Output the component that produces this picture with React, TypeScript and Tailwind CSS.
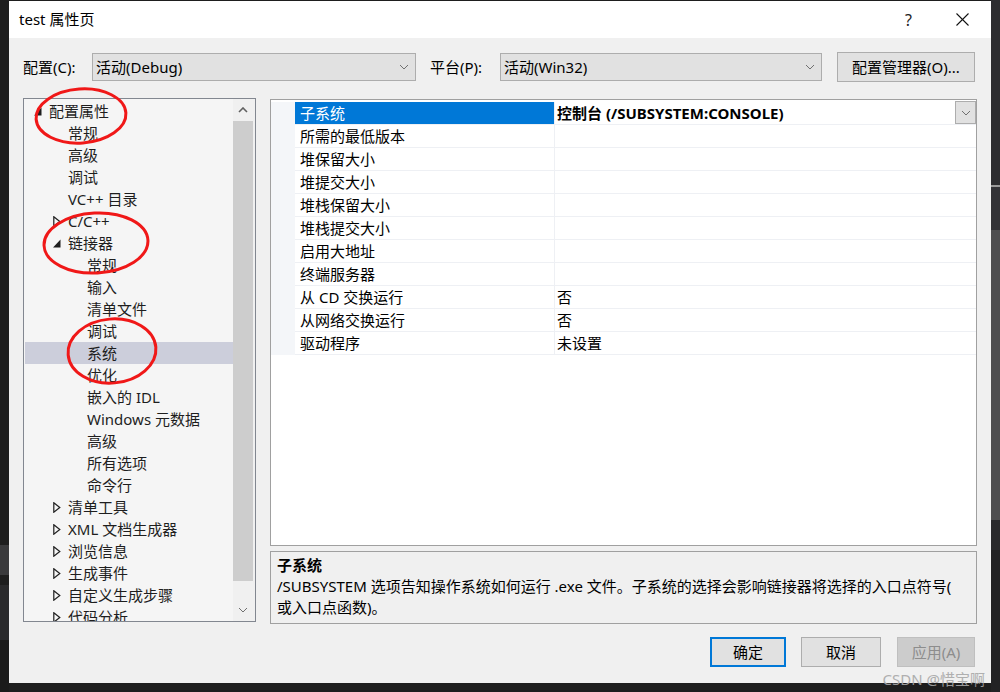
import React from 'react';

type TreeItem = { label: string; level: number; arrow?: 'open' | 'closed'; selected?: boolean };

const treeItems: TreeItem[] = [
  { label: '配置属性', level: 0, arrow: 'open' },
  { label: '常规', level: 1 },
  { label: '高级', level: 1 },
  { label: '调试', level: 1 },
  { label: 'VC++ 目录', level: 1 },
  { label: 'C/C++', level: 1, arrow: 'closed' },
  { label: '链接器', level: 1, arrow: 'open' },
  { label: '常规', level: 2 },
  { label: '输入', level: 2 },
  { label: '清单文件', level: 2 },
  { label: '调试', level: 2 },
  { label: '系统', level: 2, selected: true },
  { label: '优化', level: 2 },
  { label: '嵌入的 IDL', level: 2 },
  { label: 'Windows 元数据', level: 2 },
  { label: '高级', level: 2 },
  { label: '所有选项', level: 2 },
  { label: '命令行', level: 2 },
  { label: '清单工具', level: 1, arrow: 'closed' },
  { label: 'XML 文档生成器', level: 1, arrow: 'closed' },
  { label: '浏览信息', level: 1, arrow: 'closed' },
  { label: '生成事件', level: 1, arrow: 'closed' },
  { label: '自定义生成步骤', level: 1, arrow: 'closed' },
  { label: '代码分析', level: 1, arrow: 'closed' },
];

const props: { name: string; value: string }[] = [
  { name: '子系统', value: '控制台 (/SUBSYSTEM:CONSOLE)' },
  { name: '所需的最低版本', value: '' },
  { name: '堆保留大小', value: '' },
  { name: '堆提交大小', value: '' },
  { name: '堆栈保留大小', value: '' },
  { name: '堆栈提交大小', value: '' },
  { name: '启用大地址', value: '' },
  { name: '终端服务器', value: '' },
  { name: '从 CD 交换运行', value: '否' },
  { name: '从网络交换运行', value: '否' },
  { name: '驱动程序', value: '未设置' },
];

const indent = ['pl-[24px]', 'pl-[43px]', 'pl-[62px]'];
const arrowLeft = ['left-[9px]', 'left-[28px]', 'left-[47px]'];

function Chevron({ up = false }: { up?: boolean }) {
  return (
    <svg width="10" height="6" viewBox="0 0 10 6" className="shrink-0">
      <polyline
        points={up ? '1,5 5,1 9,5' : '1,1 5,5 9,1'}
        fill="none"
        stroke={up ? '#606060' : '#707070'}
        strokeWidth={up ? 1.6 : 1}
      />
    </svg>
  );
}

function TreeArrow({ kind }: { kind: 'open' | 'closed' }) {
  if (kind === 'open') {
    return (
      <svg width="8" height="9" viewBox="0 0 8 9">
        <polygon points="7.5,0.5 7.5,8.5 0,8.5" fill="#1e1e1e" />
      </svg>
    );
  }
  return (
    <svg width="8" height="11" viewBox="0 0 8 11">
      <polygon points="0.8,0.8 6.8,5.5 0.8,10.2" fill="none" stroke="#1e1e1e" strokeWidth="1.2" />
    </svg>
  );
}

function Select({ value, width }: { value: string; width: string }) {
  return (
    <div
      className={`${width} h-[28px] border border-[#adadad] bg-[#e1e1e1] flex items-center pl-[3px] pr-[6px]`}
    >
      <span className="flex-1 leading-none">{value}</span>
      <Chevron />
    </div>
  );
}

export default function App() {
  return (
    <div className="relative w-[1000px] h-[692px] bg-[#1e1e1e] flex overflow-hidden text-[15px] text-black font-['Noto_Sans','Noto_Sans_CJK_SC',sans-serif]">
      {/* VS behind the dialog, left strip */}
      <div className="w-[9px] flex flex-col">
        <div className="h-[545px] bg-[#1e1e1e]" />
        <div className="h-[30px] bg-[#3a3a3c]" />
        <div className="h-[10px] bg-[#1e1e1e]" />
        <div className="h-[55px] bg-[#2a2a2c]" />
        <div className="flex-1 bg-[#1b1b1b]" />
      </div>

      {/* Dialog */}
      <div className="w-[982px] h-[682px] mt-[1px] bg-[#f0f0f0] flex flex-col">
        {/* Title bar */}
        <div className="h-[37px] bg-white flex items-center pl-[10px] pr-[22px]">
          <span className="leading-none">test 属性页</span>
          <span className="ml-auto mr-[44px] text-[16px] leading-none text-[#222]">?</span>
          <svg width="13" height="13" viewBox="0 0 13 13">
            <line x1="0.5" y1="0.5" x2="12.5" y2="12.5" stroke="#111" strokeWidth="1.1" />
            <line x1="12.5" y1="0.5" x2="0.5" y2="12.5" stroke="#111" strokeWidth="1.1" />
          </svg>
        </div>

        {/* Configuration row */}
        <div className="mt-[14px] h-[30px] px-[14px] flex items-center">
          <span className="w-[69px] leading-none">配置(C):</span>
          <Select value="活动(Debug)" width="w-[324px]" />
          <span className="w-[70px] ml-[14px] leading-none">平台(P):</span>
          <Select value="活动(Win32)" width="w-[322px]" />
          <button className="ml-[15px] w-[138px] h-[30px] border border-[#adadad] bg-[#e1e1e1] leading-none">
            配置管理器(O)...
          </button>
        </div>

        {/* Main area */}
        <div className="mt-[16px] px-[14px] flex gap-[14px] items-start">
          {/* Tree */}
          <div className="w-[233px] h-[524px] border border-[#828790] bg-[#f5f5f5] flex">
            <div className="flex-1 overflow-hidden pt-[1px] pl-[1px]">
              {treeItems.map((item, i) => (
                <div
                  key={i}
                  className={`relative h-[22px] flex items-center leading-none text-[#1e1e1e] ${indent[item.level]} ${
                    item.selected ? 'bg-[#cccedb]' : ''
                  }`}
                >
                  {item.arrow && (
                    <span className={`absolute ${arrowLeft[item.level]} top-0 h-full flex items-center`}>
                      <TreeArrow kind={item.arrow} />
                    </span>
                  )}
                  <span className="whitespace-nowrap">{item.label}</span>
                </div>
              ))}
            </div>
            <div className="w-[22px] bg-[#f0f0f0] flex flex-col">
              <div className="h-[22px] w-[20px] flex items-center justify-center">
                <Chevron up />
              </div>
              <div className="h-[460px] w-[20px] bg-[#cdcdcd]" />
              <div className="h-[17px]" />
              <div className="h-[23px] w-[20px] flex items-center justify-center">
                <Chevron />
              </div>
            </div>
          </div>

          {/* Right column */}
          <div className="flex-1 flex flex-col mt-[1px]">
            <div className="h-[447px] border border-[#a0a0a0] bg-white pt-[2px]">
              <div className="flex">
                <div className="w-[24px] bg-[#f4f6f9]" />
                <div className="flex-1">
                  {props.map((p, i) => (
                    <div key={i} className="h-[23px] flex border-b border-[#eef0f4]">
                      <div
                        className={`w-[259px] pl-[5px] flex items-center leading-none ${
                          i === 0 ? 'bg-[#0078d7] text-white' : ''
                        }`}
                      >
                        {p.name}
                      </div>
                      <div className="flex-1 border-l border-[#eef0f4] pl-[2px] flex items-center leading-none">
                        <span className={`flex-1 whitespace-nowrap ${i === 0 ? 'font-bold' : ''}`}>{p.value}</span>
                        {i === 0 && (
                          <div className="w-[21px] h-[23px] -mt-[1px] border border-[#adadad] bg-[#e1e1e1] flex items-center justify-center">
                            <Chevron />
                          </div>
                        )}
                      </div>
                    </div>
                  ))}
                </div>
              </div>
            </div>

            <div className="mt-[5px] h-[73px] border border-[#a0a0a0] bg-[#f0f0f0] pl-[6px] pt-[3px] leading-[21px] whitespace-nowrap">
              <div className="font-bold">子系统</div>
              <div>/SUBSYSTEM 选项告知操作系统如何运行 .exe 文件。子系统的选择会影响链接器将选择的入口点符号(</div>
              <div>或入口点函数)。</div>
            </div>
          </div>
        </div>

        {/* Buttons */}
        <div className="mt-[13px] px-[16px] flex justify-end items-center">
          <button className="w-[76px] h-[30px] border-2 border-[#0078d7] bg-[#e1e1e1] leading-none">确定</button>
          <button className="ml-[15px] w-[80px] h-[30px] border border-[#adadad] bg-[#e1e1e1] leading-none">
            取消
          </button>
          <button className="ml-[16px] w-[78px] h-[30px] border border-[#bfbfbf] bg-[#cccccc] text-[#8d8d8d] leading-none">
            应用(A)
          </button>
        </div>
      </div>

      {/* VS behind the dialog, right strip */}
      <div className="w-[9px] flex flex-col">
        <div className="h-[185px] bg-[#2d2d30]" />
        <div className="h-[2px] bg-[#9a9a9a]" />
        <div className="h-[43px] bg-[#333337]" />
        <div className="h-[290px] bg-[#4e4e50]" />
        <div className="h-[30px] bg-[#2a2a2c]" />
        <div className="flex-1 bg-[#222224]" />
      </div>

      {/* Red hand-drawn annotations */}
      <svg className="absolute inset-0 pointer-events-none" width="1000" height="692" viewBox="0 0 1000 692">
        <ellipse cx="81" cy="116" rx="45" ry="27" transform="rotate(-4 81 116)" fill="none" stroke="#f01818" strokeWidth="3" />
        <ellipse cx="96" cy="243" rx="52" ry="30" transform="rotate(-3 96 243)" fill="none" stroke="#f01818" strokeWidth="3" />
        <ellipse cx="112" cy="351" rx="44" ry="32" transform="rotate(-5 112 351)" fill="none" stroke="#f01818" strokeWidth="3" />
      </svg>

      {/* Watermark */}
      <div className="absolute right-[15px] bottom-[5px] text-[15px] leading-none text-[#a8a8a8] opacity-90 whitespace-nowrap">
        CSDN @惜宝啊
      </div>
    </div>
  );
}
